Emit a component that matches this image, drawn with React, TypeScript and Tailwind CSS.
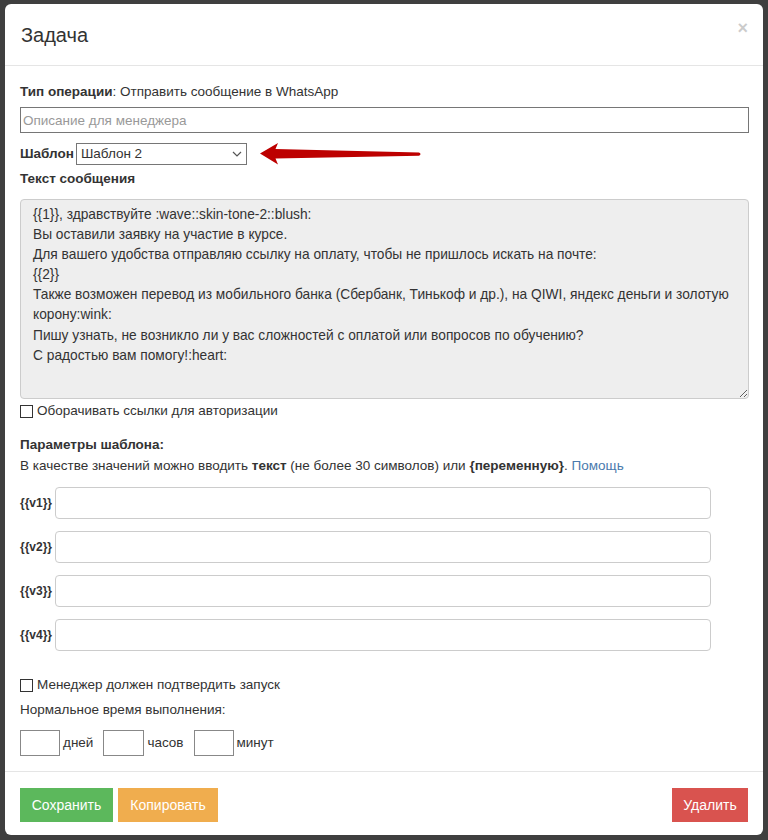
import React from "react";

const msg = `{{1}}, здравствуйте :wave::skin-tone-2::blush:
Вы оставили заявку на участие в курсе.
Для вашего удобства отправляю ссылку на оплату, чтобы не пришлось искать на почте:
{{2}}
Также возможен перевод из мобильного банка (Сбербанк, Тинькоф и др.), на QIWI, яндекс деньги и золотую
корону:wink:
Пишу узнать, не возникло ли у вас сложностей с оплатой или вопросов по обучению?
С радостью вам помогу!:heart:`;

function Box() {
  return <span className="inline-block w-[13px] h-[13px] border border-[#333] bg-white mr-[4px] shrink-0" />;
}

function VarRow({ label, mt }: { label: string; mt: string }) {
  return (
    <div className={`flex items-center ${mt}`}>
      <span className="font-bold text-[12px] mr-[3px]">{label}</span>
      <input className="w-[656px] h-[32px] border border-[#ccc] rounded-[4px] bg-white outline-none" />
    </div>
  );
}

export default function App() {
  return (
    <div className="w-[768px] h-[840px] bg-[#3f3f3f] pt-[4px] pl-[5px]" style={{ fontFamily: '"Liberation Sans", Arial, sans-serif' }}>
      <div className="w-[758px] h-[831px] bg-white rounded-[6px] text-[#333] text-[13.5px] flex flex-col">
        <div className="h-[62px] border-b border-[#e5e5e5] flex items-start justify-between pl-[16px] pr-[16px]">
          <h4 className="text-[20px] leading-[24px] mt-[19px] text-[#333]">Задача</h4>
          <span className="text-[18px] leading-[18px] mt-[15px] mr-[-1px] font-bold text-black opacity-20">×</span>
        </div>
        <div className="px-[15px] pt-[16px] pb-[15px] border-b border-[#e5e5e5]">
          <div className="leading-[20px]">
            <b>Тип операции</b>: Отправить сообщение в WhatsApp
          </div>
          <input
            placeholder="Описание для менеджера"
            className="mt-[5px] w-[729px] h-[26px] border border-[#767676] px-[2px] text-[13.5px] placeholder:text-[#999] outline-none block"
          />
          <div className="flex items-center mt-[10px] h-[22px]">
            <b className="mr-[2px]">Шаблон</b>
            <div className="w-[171px] h-[22px] border border-[#767676] flex items-center justify-between pl-[4px] pr-[4px]">
              <span>Шаблон 2</span>
              <svg width="10" height="6" viewBox="0 0 10 6">
                <path d="M1 1l4 4 4-4" fill="none" stroke="#555" strokeWidth="1.2" />
              </svg>
            </div>
            <svg width="166" height="24" viewBox="0 0 166 24" className="ml-[10px]">
              <path d="M3 11.5 L21 1 L18.5 7 L162 10.5 Q165 12 162 13.8 L18.5 16.5 L21 22.5 Z" fill="#bd0000" />
            </svg>
          </div>
          <div className="leading-[20px] mt-[4px] font-bold">Текст сообщения</div>
          <textarea
            readOnly
            wrap="off"
            value={msg}
            className="mt-[10px] block w-[729px] h-[200px] bg-[#eee] border border-[#ccc] rounded-[4px] pl-[12px] pt-[5px] text-[13.75px] leading-[20.1px] text-[#333] overflow-hidden outline-none resize-y"
          />
          <div className="mt-[2px] leading-[20px] flex items-center">
            <Box />
            Оборачивать ссылки для авторизации
          </div>
          <div className="mt-[14px] leading-[20px] font-bold">Параметры шаблона:</div>
          <div className="mt-[1px] leading-[20px]">
            В качестве значений можно вводить <b>текст</b> (не более 30 символов) или <b>{"{переменную}"}</b>.{" "}
            <span className="text-[#4a7aad]">Помощь</span>
          </div>
          <VarRow label="{{v1}}" mt="mt-[11px]" />
          <VarRow label="{{v2}}" mt="mt-[12px]" />
          <VarRow label="{{v3}}" mt="mt-[12px]" />
          <VarRow label="{{v4}}" mt="mt-[12px]" />
          <div className="mt-[24px] leading-[20px] flex items-center">
            <Box />
            Менеджер должен подтвердить запуск
          </div>
          <div className="mt-[5px] leading-[20px]">Нормальное время выполнения:</div>
          <div className="mt-[10px] flex items-center h-[26px]">
            <input className="w-[40px] h-[26px] border border-[#888] outline-none" />
            <span className="ml-[3px] mr-[10px]">дней</span>
            <input className="w-[41px] h-[26px] border border-[#888] outline-none" />
            <span className="ml-[3px] mr-[10px]">часов</span>
            <input className="w-[40px] h-[26px] border border-[#888] outline-none" />
            <span className="ml-[3px]">минут</span>
          </div>
        </div>
        <div className="px-[15px] pt-[16px] flex items-start">
          <button className="h-[34px] w-[93px] bg-[#5cb85c] text-white text-[14px]">Сохранить</button>
          <button className="ml-[5px] h-[34px] w-[100px] bg-[#f0ad4e] text-white text-[14px]">Копировать</button>
          <div className="flex-1" />
          <button className="h-[34px] w-[76px] bg-[#d9534f] text-white text-[14px]">Удалить</button>
        </div>
      </div>
    </div>
  );
}
